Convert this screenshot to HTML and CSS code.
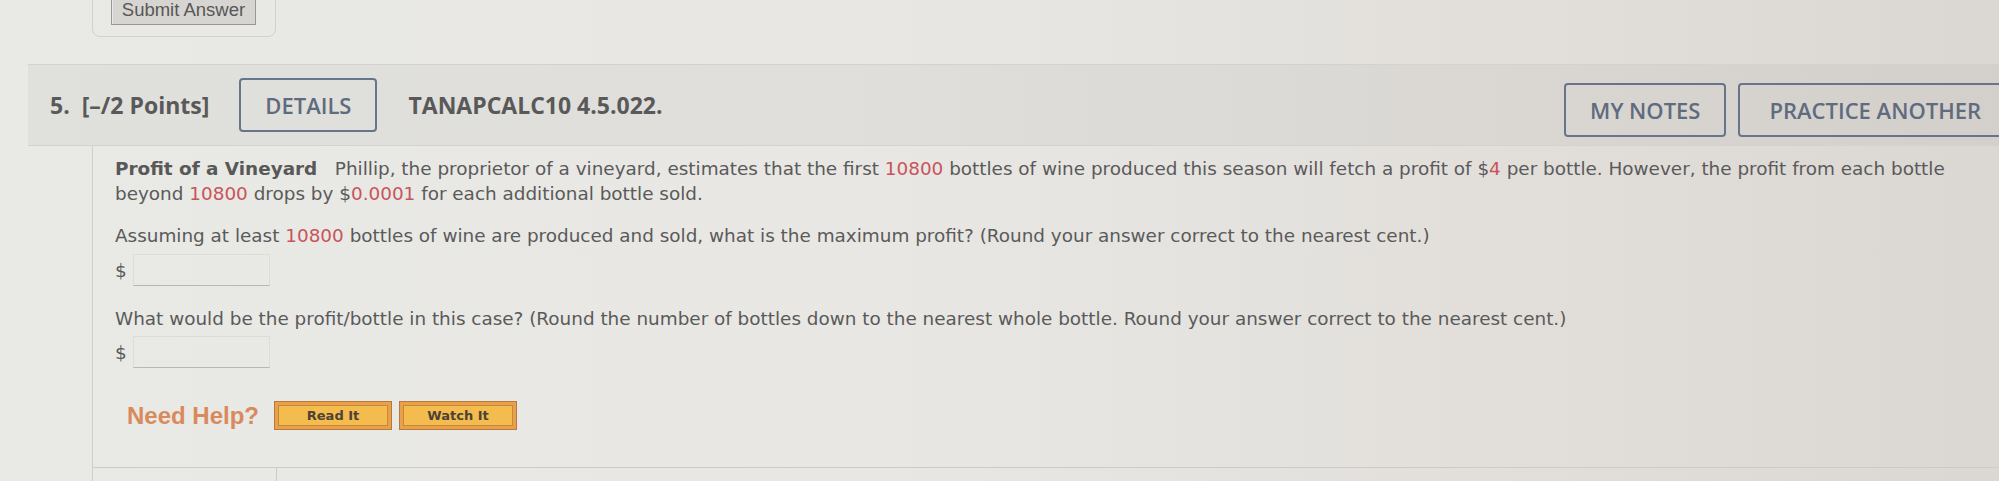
FILE: index.html
```html
<!DOCTYPE html>
<html lang="en">
<head>
<meta charset="utf-8">
<title>Question 5</title>
<link rel="stylesheet" href="styles.css">
</head>
<body>
<div class="page">
  <div class="submit-wrap">
    <button class="submit-btn" type="button">Submit Answer</button>
  </div>

  <section class="question">
    <div class="qhead">
      <span class="qnum">5.</span>
      <span class="qpts">[–/2 Points]</span>
      <button class="hbtn details" type="button">DETAILS</button>
      <span class="qcode">TANAPCALC10 4.5.022.</span>
      <div class="hright">
        <button class="hbtn" type="button">MY NOTES</button>
        <button class="hbtn practice" type="button">PRACTICE ANOTHER</button>
      </div>
    </div>

    <div class="qbody">
      <p class="intro"><b class="title">Profit of a Vineyard</b>&nbsp;&nbsp; Phillip, the proprietor of a vineyard, estimates that the first <span class="num">10800</span> bottles of wine produced this season will fetch a profit of $<span class="num">4</span> per bottle. However, the profit from each bottle beyond <span class="num">10800</span> drops by $<span class="num">0.0001</span> for each additional bottle sold.</p>

      <p class="q">Assuming at least <span class="num">10800</span> bottles of wine are produced and sold, what is the maximum profit? (Round your answer correct to the nearest cent.)</p>
      <div class="ans ans1"><span class="cur">$</span><span class="inp"></span></div>

      <p class="q q2">What would be the profit/bottle in this case? (Round the number of bottles down to the nearest whole bottle. Round your answer correct to the nearest cent.)</p>
      <div class="ans ans2"><span class="cur">$</span><span class="inp"></span></div>

      <div class="help">
        <span class="help-label">Need Help?</span>
        <button class="hb" type="button"><span>Read It</span></button>
        <button class="hb" type="button"><span>Watch It</span></button>
      </div>

      <div class="qfoot"><div class="subbox"></div></div>
    </div>
  </section>
</div>
</body>
</html>
```

FILE: styles.css
```css
html, body {
  margin: 0;
  padding: 0;
}

body {
  width: 1999px;
  height: 481px;
  overflow: hidden;
  background: linear-gradient(90deg, #e9e9e6 0%, #e8e7e3 45%, #e2dfdb 75%, #dbd7d3 100%);
  font-family: "DejaVu Sans", Verdana, sans-serif;
  color: #5a5a5a;
}

.page {
  padding-top: 1px;
  margin-top: -1px;
}

/* submit box at top */
.submit-wrap {
  box-sizing: border-box;
  margin-top: -19px;
  margin-left: 92px;
  width: 184px;
  height: 56px;
  border: 1px solid #d2d0cc;
  border-radius: 0 0 8px 8px;
  display: flex;
  align-items: flex-end;
  padding: 0 0 11px 18px;
}

.submit-btn {
  box-sizing: border-box;
  width: 145px;
  height: 30px;
  padding: 0;
  font-family: "Liberation Sans", Arial, sans-serif;
  font-size: 18.5px;
  color: #575757;
  background: #d7d5d1;
  border: 1px solid #9a9895;
  box-shadow: inset 1px 1px 0 #e8e7e4;
}

/* question */
.question {
  margin-top: 27px;
  margin-left: 28px;
}

.qhead {
  box-sizing: border-box;
  height: 82px;
  display: flex;
  align-items: center;
  padding: 0 0 0 22px;
  border-top: 1px solid #d3d2ce;
  border-bottom: 1px solid #d3d2ce;
  background: rgba(0, 0, 0, 0.035);
  font-family: "Open Sans", "Liberation Sans", sans-serif;
}

.qnum, .qpts, .qcode {
  font-weight: 700;
  font-size: 23px;
  color: #595959;
}

.qpts {
  margin-left: 12px;
}

.hbtn {
  box-sizing: border-box;
  height: 54px;
  padding: 0 24px;
  border: 2px solid #67758b;
  border-radius: 4px;
  background: transparent;
  font-family: "Open Sans", "Liberation Sans", sans-serif;
  font-weight: 600;
  font-size: 22px;
  color: #5f6b7e;
}

.practice {
  padding: 0 29px;
}

.details {
  margin-left: 30px;
}

.qcode {
  margin-left: 31px;
}

.hright {
  margin-left: auto;
  margin-right: -13px;
  display: flex;
  gap: 12px;
  margin-top: 10px;
}

/* body */
.qbody {
  margin-left: 64px;
  border-left: 1px solid #cfcdc9;
  padding: 10px 24px 0 22px;
  font-size: 18.4px;
  line-height: 25px;
}

.qbody p {
  margin: 0;
}

.title {
  font-weight: 700;
  color: #585858;
}

.num {
  color: #c8545b;
}

.q {
  margin-top: 17px !important;
}

.q2 {
  margin-top: 20px !important;
}

.ans {
  display: flex;
  align-items: center;
  height: 32px;
}

.ans1 {
  margin-top: 6px;
}

.ans2 {
  margin-top: 5px;
}

.cur {
  width: 18px;
}

.inp {
  box-sizing: border-box;
  width: 137px;
  height: 32px;
  border: 1px solid #dedcd8;
  border-bottom: 1px solid #b9b7b3;
}

/* help */
.help {
  margin-top: 33px;
  display: flex;
  align-items: center;
  padding-left: 12px;
  height: 29px;
}

.help-label {
  font-family: "Liberation Sans", Arial, sans-serif;
  font-weight: 700;
  font-size: 24px;
  color: #d98a5d;
  margin-right: 15px;
}

.hb {
  box-sizing: border-box;
  width: 118px;
  height: 29px;
  padding: 3px;
  margin-right: 7px;
  border: 1px solid #b47a3e;
  background: #eaa047;
}

.hb span {
  box-sizing: border-box;
  display: block;
  height: 100%;
  border: 1px solid #c5883f;
  background: #f4bc4e;
  font-family: "DejaVu Sans", Verdana, sans-serif;
  font-weight: 700;
  font-size: 13px;
  line-height: 19px;
  color: #4d4236;
  text-align: center;
}

/* footer */
.qfoot {
  margin: 37px -24px 0 -22px;
  border-top: 1px solid #cdcbc7;
  padding-left: 183px;
}

.subbox {
  height: 30px;
  border-left: 1px solid #cdcbc7;
}
```
